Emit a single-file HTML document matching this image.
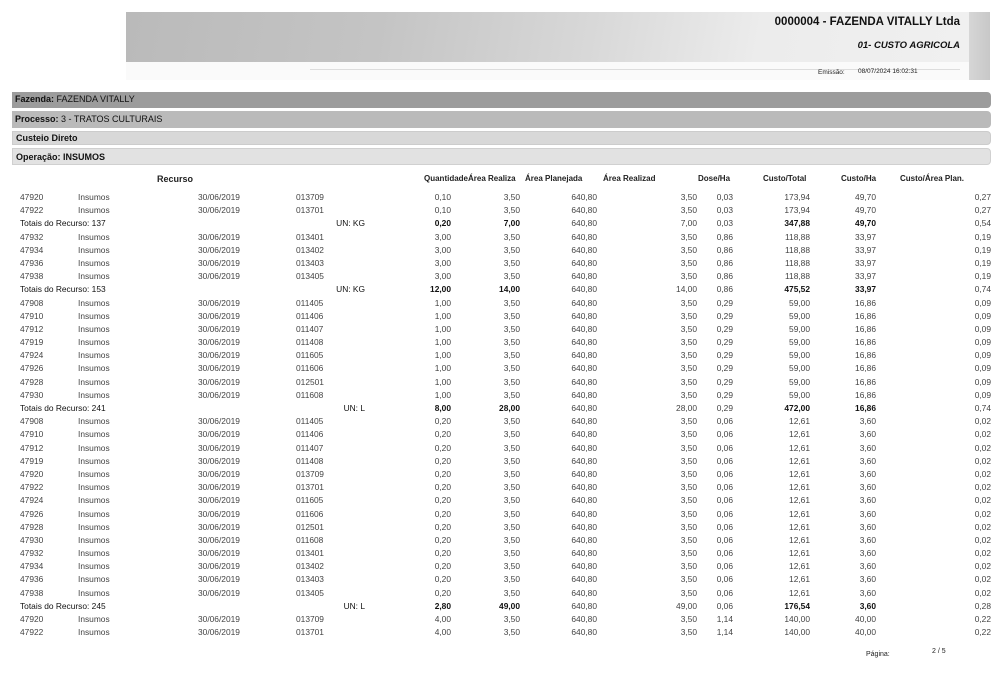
<!DOCTYPE html>
<html><head><meta charset="utf-8"><style>
body{margin:0;width:1004px;height:693px;background:#fff;position:relative;overflow:hidden;font-family:"Liberation Sans",sans-serif;color:#333}
.a{position:absolute;white-space:nowrap}
.ban{position:absolute;left:126px;top:12px;width:843px;height:50px;background:linear-gradient(100deg,#bababa 0%,#c4c4c4 30%,#d8d8d8 55%,#ececec 75%,#f0f0f0 100%)}
.ban2{position:absolute;left:126px;top:62px;width:843px;height:18px;background:#fafafa}
.strip{position:absolute;left:969px;top:12px;width:21px;height:68px;background:linear-gradient(90deg,#d6d6d6,#c8c8c8)}
.bar{position:absolute;left:12px;width:979px;border-radius:0 4px 4px 0;font-size:9px;line-height:1;padding-left:3px;box-sizing:border-box;color:#111}
.rows{position:absolute;left:0;top:191px;width:1004px}
.r{position:relative;height:13.2px;font-size:8.4px;line-height:13.2px;color:#444}
.r span{position:absolute;white-space:nowrap}
.c1{left:20px}.c2{left:78px}.c3{left:198px}.c4{left:296px}
.un{right:639px}.q{right:553px}.ar{right:484px}.ap{right:407px}.ad{right:307px}.d{right:271px}.ct{right:194px}.ch{right:128px}.ca{right:13px}
.t{color:#111}.t b,.b{font-weight:bold;color:#111}
.h{position:absolute;top:174px;font-size:8px;font-weight:bold;color:#222;white-space:nowrap}
</style></head><body>
<div class="ban"></div><div class="ban2"></div><div class="strip"></div>
<div class="a" style="left:310px;top:69px;width:650px;height:1px;background:#ddd"></div>
<div class="a" style="right:44px;top:16px;font-size:11.5px;font-weight:bold;color:#111">0000004 - FAZENDA VITALLY Ltda</div>
<div class="a" style="right:44px;top:40px;font-size:9.5px;font-weight:bold;font-style:italic;color:#111">01- CUSTO AGRICOLA</div>
<div class="a" style="left:818px;top:69px;font-size:6.5px;color:#222">Emissão:</div>
<div class="a" style="left:858px;top:68px;font-size:6.5px;color:#222">08/07/2024 16:02:31</div>

<div class="bar" style="top:92px;height:16px;background:#9c9c9c;padding-top:3px"><b>Fazenda:</b> FAZENDA VITALLY</div>
<div class="bar" style="top:111px;height:17px;background:#bababa;padding-top:4px"><b>Processo:</b> 3 - TRATOS CULTURAIS</div>
<div class="bar" style="top:131px;height:14px;background:#d8d8d8;padding-top:2px;border:1px solid #ccc"><b>Custeio Direto</b></div>
<div class="bar" style="top:148px;height:17px;background:#e2e2e2;padding-top:4px;border:1px solid #d0d0d0"><b>Operação: INSUMOS</b></div>

<div class="h" style="left:157px;font-size:9px">Recurso</div>
<div class="h" style="left:424px">Quantidade</div>
<div class="h" style="left:468px">Área Realiza</div>
<div class="h" style="left:525px">Área Planejada</div>
<div class="h" style="left:603px">Área Realizad</div>
<div class="h" style="left:698px">Dose/Ha</div>
<div class="h" style="left:763px">Custo/Total</div>
<div class="h" style="left:841px">Custo/Ha</div>
<div class="h" style="left:900px">Custo/Área Plan.</div>

<div class="rows">
<div class="r"><span class="c1">47920</span><span class="c2">Insumos</span><span class="c3">30/06/2019</span><span class="c4">013709</span><span class="q">0,10</span><span class="ar">3,50</span><span class="ap">640,80</span><span class="ad">3,50</span><span class="d">0,03</span><span class="ct">173,94</span><span class="ch">49,70</span><span class="ca">0,27</span></div>
<div class="r"><span class="c1">47922</span><span class="c2">Insumos</span><span class="c3">30/06/2019</span><span class="c4">013701</span><span class="q">0,10</span><span class="ar">3,50</span><span class="ap">640,80</span><span class="ad">3,50</span><span class="d">0,03</span><span class="ct">173,94</span><span class="ch">49,70</span><span class="ca">0,27</span></div>
<div class="r"><span class="c1 t">Totais do Recurso: 137</span><span class="un t">UN: KG</span><span class="q b">0,20</span><span class="ar b">7,00</span><span class="ap">640,80</span><span class="ad">7,00</span><span class="d">0,03</span><span class="ct b">347,88</span><span class="ch b">49,70</span><span class="ca">0,54</span></div>
<div class="r"><span class="c1">47932</span><span class="c2">Insumos</span><span class="c3">30/06/2019</span><span class="c4">013401</span><span class="q">3,00</span><span class="ar">3,50</span><span class="ap">640,80</span><span class="ad">3,50</span><span class="d">0,86</span><span class="ct">118,88</span><span class="ch">33,97</span><span class="ca">0,19</span></div>
<div class="r"><span class="c1">47934</span><span class="c2">Insumos</span><span class="c3">30/06/2019</span><span class="c4">013402</span><span class="q">3,00</span><span class="ar">3,50</span><span class="ap">640,80</span><span class="ad">3,50</span><span class="d">0,86</span><span class="ct">118,88</span><span class="ch">33,97</span><span class="ca">0,19</span></div>
<div class="r"><span class="c1">47936</span><span class="c2">Insumos</span><span class="c3">30/06/2019</span><span class="c4">013403</span><span class="q">3,00</span><span class="ar">3,50</span><span class="ap">640,80</span><span class="ad">3,50</span><span class="d">0,86</span><span class="ct">118,88</span><span class="ch">33,97</span><span class="ca">0,19</span></div>
<div class="r"><span class="c1">47938</span><span class="c2">Insumos</span><span class="c3">30/06/2019</span><span class="c4">013405</span><span class="q">3,00</span><span class="ar">3,50</span><span class="ap">640,80</span><span class="ad">3,50</span><span class="d">0,86</span><span class="ct">118,88</span><span class="ch">33,97</span><span class="ca">0,19</span></div>
<div class="r"><span class="c1 t">Totais do Recurso: 153</span><span class="un t">UN: KG</span><span class="q b">12,00</span><span class="ar b">14,00</span><span class="ap">640,80</span><span class="ad">14,00</span><span class="d">0,86</span><span class="ct b">475,52</span><span class="ch b">33,97</span><span class="ca">0,74</span></div>
<div class="r"><span class="c1">47908</span><span class="c2">Insumos</span><span class="c3">30/06/2019</span><span class="c4">011405</span><span class="q">1,00</span><span class="ar">3,50</span><span class="ap">640,80</span><span class="ad">3,50</span><span class="d">0,29</span><span class="ct">59,00</span><span class="ch">16,86</span><span class="ca">0,09</span></div>
<div class="r"><span class="c1">47910</span><span class="c2">Insumos</span><span class="c3">30/06/2019</span><span class="c4">011406</span><span class="q">1,00</span><span class="ar">3,50</span><span class="ap">640,80</span><span class="ad">3,50</span><span class="d">0,29</span><span class="ct">59,00</span><span class="ch">16,86</span><span class="ca">0,09</span></div>
<div class="r"><span class="c1">47912</span><span class="c2">Insumos</span><span class="c3">30/06/2019</span><span class="c4">011407</span><span class="q">1,00</span><span class="ar">3,50</span><span class="ap">640,80</span><span class="ad">3,50</span><span class="d">0,29</span><span class="ct">59,00</span><span class="ch">16,86</span><span class="ca">0,09</span></div>
<div class="r"><span class="c1">47919</span><span class="c2">Insumos</span><span class="c3">30/06/2019</span><span class="c4">011408</span><span class="q">1,00</span><span class="ar">3,50</span><span class="ap">640,80</span><span class="ad">3,50</span><span class="d">0,29</span><span class="ct">59,00</span><span class="ch">16,86</span><span class="ca">0,09</span></div>
<div class="r"><span class="c1">47924</span><span class="c2">Insumos</span><span class="c3">30/06/2019</span><span class="c4">011605</span><span class="q">1,00</span><span class="ar">3,50</span><span class="ap">640,80</span><span class="ad">3,50</span><span class="d">0,29</span><span class="ct">59,00</span><span class="ch">16,86</span><span class="ca">0,09</span></div>
<div class="r"><span class="c1">47926</span><span class="c2">Insumos</span><span class="c3">30/06/2019</span><span class="c4">011606</span><span class="q">1,00</span><span class="ar">3,50</span><span class="ap">640,80</span><span class="ad">3,50</span><span class="d">0,29</span><span class="ct">59,00</span><span class="ch">16,86</span><span class="ca">0,09</span></div>
<div class="r"><span class="c1">47928</span><span class="c2">Insumos</span><span class="c3">30/06/2019</span><span class="c4">012501</span><span class="q">1,00</span><span class="ar">3,50</span><span class="ap">640,80</span><span class="ad">3,50</span><span class="d">0,29</span><span class="ct">59,00</span><span class="ch">16,86</span><span class="ca">0,09</span></div>
<div class="r"><span class="c1">47930</span><span class="c2">Insumos</span><span class="c3">30/06/2019</span><span class="c4">011608</span><span class="q">1,00</span><span class="ar">3,50</span><span class="ap">640,80</span><span class="ad">3,50</span><span class="d">0,29</span><span class="ct">59,00</span><span class="ch">16,86</span><span class="ca">0,09</span></div>
<div class="r"><span class="c1 t">Totais do Recurso: 241</span><span class="un t">UN: L</span><span class="q b">8,00</span><span class="ar b">28,00</span><span class="ap">640,80</span><span class="ad">28,00</span><span class="d">0,29</span><span class="ct b">472,00</span><span class="ch b">16,86</span><span class="ca">0,74</span></div>
<div class="r"><span class="c1">47908</span><span class="c2">Insumos</span><span class="c3">30/06/2019</span><span class="c4">011405</span><span class="q">0,20</span><span class="ar">3,50</span><span class="ap">640,80</span><span class="ad">3,50</span><span class="d">0,06</span><span class="ct">12,61</span><span class="ch">3,60</span><span class="ca">0,02</span></div>
<div class="r"><span class="c1">47910</span><span class="c2">Insumos</span><span class="c3">30/06/2019</span><span class="c4">011406</span><span class="q">0,20</span><span class="ar">3,50</span><span class="ap">640,80</span><span class="ad">3,50</span><span class="d">0,06</span><span class="ct">12,61</span><span class="ch">3,60</span><span class="ca">0,02</span></div>
<div class="r"><span class="c1">47912</span><span class="c2">Insumos</span><span class="c3">30/06/2019</span><span class="c4">011407</span><span class="q">0,20</span><span class="ar">3,50</span><span class="ap">640,80</span><span class="ad">3,50</span><span class="d">0,06</span><span class="ct">12,61</span><span class="ch">3,60</span><span class="ca">0,02</span></div>
<div class="r"><span class="c1">47919</span><span class="c2">Insumos</span><span class="c3">30/06/2019</span><span class="c4">011408</span><span class="q">0,20</span><span class="ar">3,50</span><span class="ap">640,80</span><span class="ad">3,50</span><span class="d">0,06</span><span class="ct">12,61</span><span class="ch">3,60</span><span class="ca">0,02</span></div>
<div class="r"><span class="c1">47920</span><span class="c2">Insumos</span><span class="c3">30/06/2019</span><span class="c4">013709</span><span class="q">0,20</span><span class="ar">3,50</span><span class="ap">640,80</span><span class="ad">3,50</span><span class="d">0,06</span><span class="ct">12,61</span><span class="ch">3,60</span><span class="ca">0,02</span></div>
<div class="r"><span class="c1">47922</span><span class="c2">Insumos</span><span class="c3">30/06/2019</span><span class="c4">013701</span><span class="q">0,20</span><span class="ar">3,50</span><span class="ap">640,80</span><span class="ad">3,50</span><span class="d">0,06</span><span class="ct">12,61</span><span class="ch">3,60</span><span class="ca">0,02</span></div>
<div class="r"><span class="c1">47924</span><span class="c2">Insumos</span><span class="c3">30/06/2019</span><span class="c4">011605</span><span class="q">0,20</span><span class="ar">3,50</span><span class="ap">640,80</span><span class="ad">3,50</span><span class="d">0,06</span><span class="ct">12,61</span><span class="ch">3,60</span><span class="ca">0,02</span></div>
<div class="r"><span class="c1">47926</span><span class="c2">Insumos</span><span class="c3">30/06/2019</span><span class="c4">011606</span><span class="q">0,20</span><span class="ar">3,50</span><span class="ap">640,80</span><span class="ad">3,50</span><span class="d">0,06</span><span class="ct">12,61</span><span class="ch">3,60</span><span class="ca">0,02</span></div>
<div class="r"><span class="c1">47928</span><span class="c2">Insumos</span><span class="c3">30/06/2019</span><span class="c4">012501</span><span class="q">0,20</span><span class="ar">3,50</span><span class="ap">640,80</span><span class="ad">3,50</span><span class="d">0,06</span><span class="ct">12,61</span><span class="ch">3,60</span><span class="ca">0,02</span></div>
<div class="r"><span class="c1">47930</span><span class="c2">Insumos</span><span class="c3">30/06/2019</span><span class="c4">011608</span><span class="q">0,20</span><span class="ar">3,50</span><span class="ap">640,80</span><span class="ad">3,50</span><span class="d">0,06</span><span class="ct">12,61</span><span class="ch">3,60</span><span class="ca">0,02</span></div>
<div class="r"><span class="c1">47932</span><span class="c2">Insumos</span><span class="c3">30/06/2019</span><span class="c4">013401</span><span class="q">0,20</span><span class="ar">3,50</span><span class="ap">640,80</span><span class="ad">3,50</span><span class="d">0,06</span><span class="ct">12,61</span><span class="ch">3,60</span><span class="ca">0,02</span></div>
<div class="r"><span class="c1">47934</span><span class="c2">Insumos</span><span class="c3">30/06/2019</span><span class="c4">013402</span><span class="q">0,20</span><span class="ar">3,50</span><span class="ap">640,80</span><span class="ad">3,50</span><span class="d">0,06</span><span class="ct">12,61</span><span class="ch">3,60</span><span class="ca">0,02</span></div>
<div class="r"><span class="c1">47936</span><span class="c2">Insumos</span><span class="c3">30/06/2019</span><span class="c4">013403</span><span class="q">0,20</span><span class="ar">3,50</span><span class="ap">640,80</span><span class="ad">3,50</span><span class="d">0,06</span><span class="ct">12,61</span><span class="ch">3,60</span><span class="ca">0,02</span></div>
<div class="r"><span class="c1">47938</span><span class="c2">Insumos</span><span class="c3">30/06/2019</span><span class="c4">013405</span><span class="q">0,20</span><span class="ar">3,50</span><span class="ap">640,80</span><span class="ad">3,50</span><span class="d">0,06</span><span class="ct">12,61</span><span class="ch">3,60</span><span class="ca">0,02</span></div>
<div class="r"><span class="c1 t">Totais do Recurso: 245</span><span class="un t">UN: L</span><span class="q b">2,80</span><span class="ar b">49,00</span><span class="ap">640,80</span><span class="ad">49,00</span><span class="d">0,06</span><span class="ct b">176,54</span><span class="ch b">3,60</span><span class="ca">0,28</span></div>
<div class="r"><span class="c1">47920</span><span class="c2">Insumos</span><span class="c3">30/06/2019</span><span class="c4">013709</span><span class="q">4,00</span><span class="ar">3,50</span><span class="ap">640,80</span><span class="ad">3,50</span><span class="d">1,14</span><span class="ct">140,00</span><span class="ch">40,00</span><span class="ca">0,22</span></div>
<div class="r"><span class="c1">47922</span><span class="c2">Insumos</span><span class="c3">30/06/2019</span><span class="c4">013701</span><span class="q">4,00</span><span class="ar">3,50</span><span class="ap">640,80</span><span class="ad">3,50</span><span class="d">1,14</span><span class="ct">140,00</span><span class="ch">40,00</span><span class="ca">0,22</span></div>
</div>

<div class="a" style="left:866px;top:651px;font-size:7px;color:#222">Página:</div>
<div class="a" style="left:932px;top:648px;font-size:7px;color:#222">2 / 5</div>
</body></html>
